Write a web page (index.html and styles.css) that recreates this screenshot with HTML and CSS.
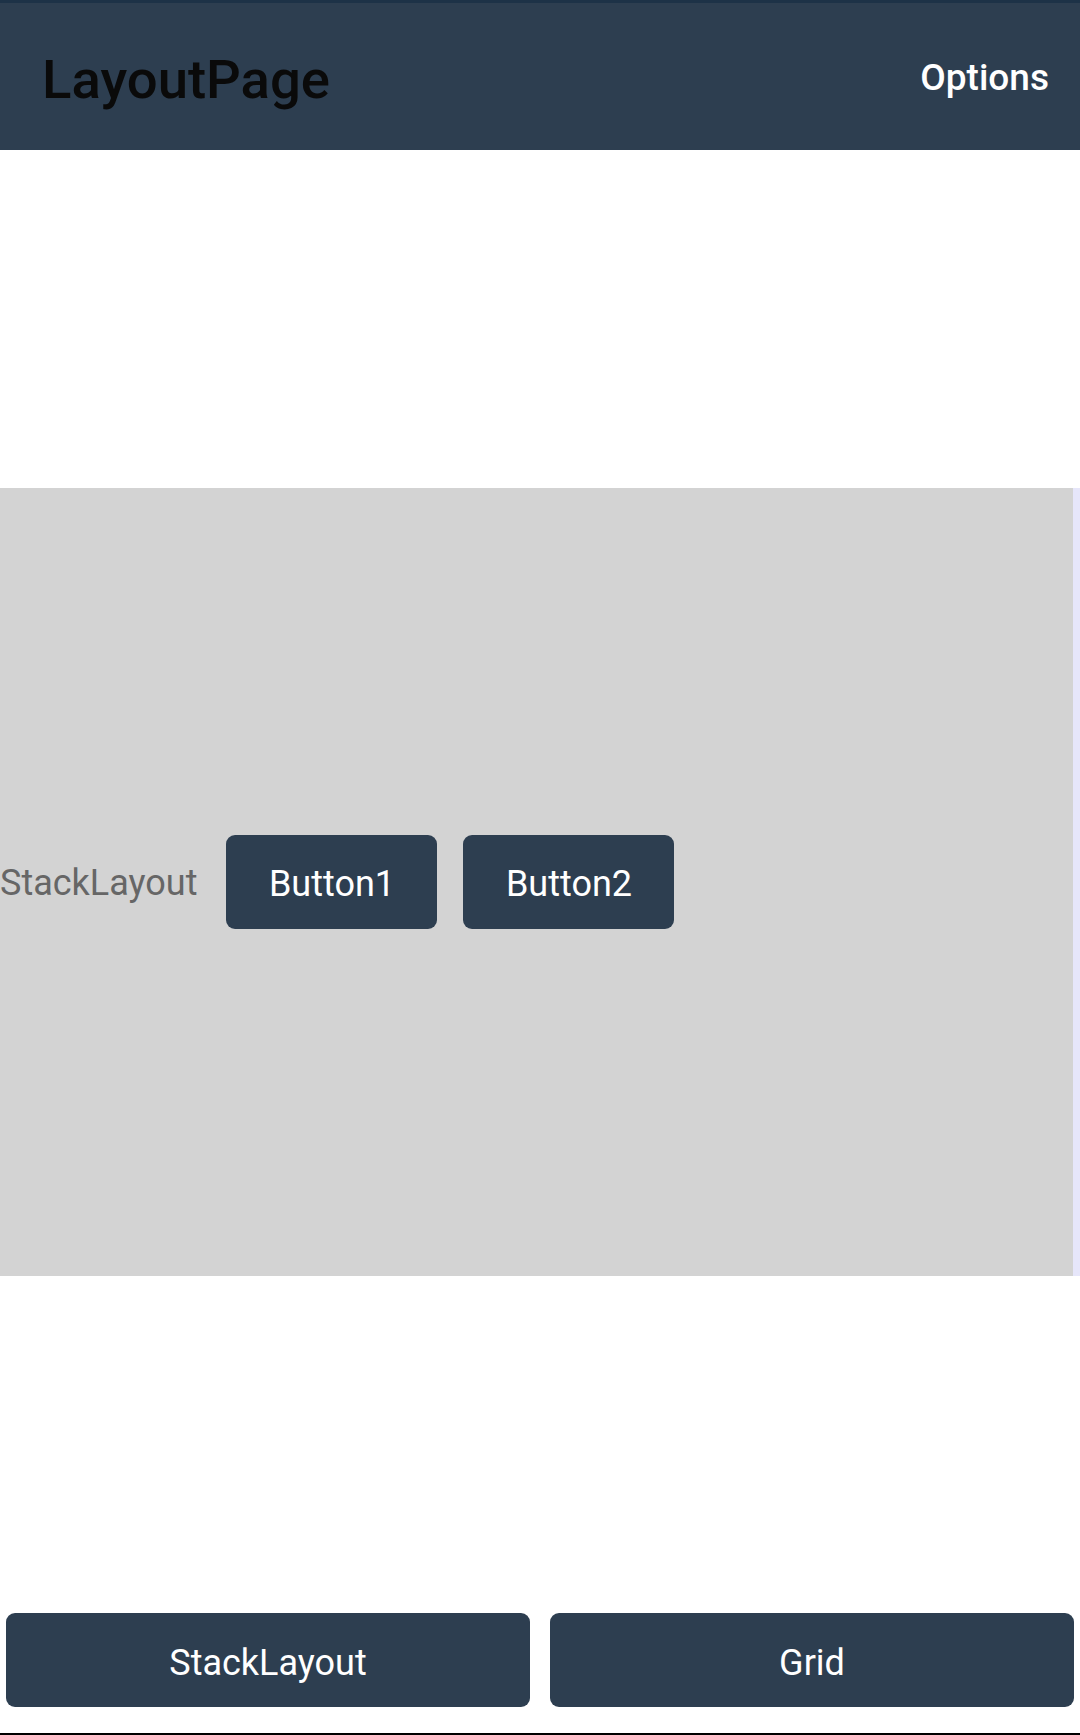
FILE: index.html
```html
<!DOCTYPE html>
<html lang="en">
<head>
<meta charset="utf-8">
<title>LayoutPage</title>
<link rel="stylesheet" href="styles.css">
</head>
<body>
<div class="app">
  <header class="toolbar">
    <h1 class="toolbar-title">LayoutPage</h1>
    <span class="toolbar-action">Options</span>
  </header>
  <main class="content">
    <div class="scroller">
      <div class="stack">
        <span class="stack-label">StackLayout</span>
        <button class="btn btn-small">Button1</button>
        <button class="btn btn-small">Button2</button>
      </div>
      <div class="scroll-edge"></div>
    </div>
  </main>
  <footer class="footer">
    <button class="btn btn-wide">StackLayout</button>
    <button class="btn btn-wide">Grid</button>
  </footer>
</div>
</body>
</html>
```

FILE: styles.css
```css
* {
  box-sizing: border-box;
}

html, body {
  margin: 0;
  padding: 0;
  background: #ffffff;
}

body {
  font-family: Roboto, "Liberation Sans", sans-serif;
}

.app {
  width: 1080px;
  height: 1735px;
  display: flex;
  flex-direction: column;
}

.toolbar {
  height: 150px;
  flex: 0 0 150px;
  background: #2d3e50;
  border-top: 3px solid #1d3247;
  display: flex;
  align-items: center;
  justify-content: space-between;
  padding: 0 31px 0 42px;
}

.toolbar-title {
  margin: 5px 0 0 0;
  font-size: 54.5px;
  line-height: 60px;
  font-weight: 500;
  color: #0a0a0a;
}

.toolbar-action {
  margin-top: 2px;
  font-size: 37px;
  line-height: 44px;
  font-weight: 500;
  color: #ffffff;
}

.content {
  flex: 1 1 auto;
  display: flex;
  flex-direction: column;
  justify-content: center;
}

.scroller {
  height: 788px;
  display: flex;
}

.stack {
  flex: 1 1 auto;
  background: #d3d3d3;
  display: flex;
  align-items: center;
  gap: 26px;
}

.scroll-edge {
  flex: 0 0 7px;
  background: #e6e6fa;
}

.stack-label {
  font-size: 36px;
  color: #666666;
  margin-right: 3px;
  padding-top: 3px;
}

.btn {
  border: none;
  margin: 0;
  padding: 5px 0 0 0;
  background: #2d3e50;
  color: #ffffff;
  font-family: Roboto, "Liberation Sans", sans-serif;
  font-size: 36px;
  font-weight: 400;
  border-radius: 9px;
  display: flex;
  align-items: center;
  justify-content: center;
}

.btn-small {
  width: 211px;
  height: 94px;
}

.footer {
  flex: 0 0 122px;
  display: flex;
  gap: 20px;
  padding: 0 6px 26px 6px;
  border-bottom: 2px solid #000000;
}

.btn-wide {
  flex: 1 1 0;
  height: 94px;
}
```
